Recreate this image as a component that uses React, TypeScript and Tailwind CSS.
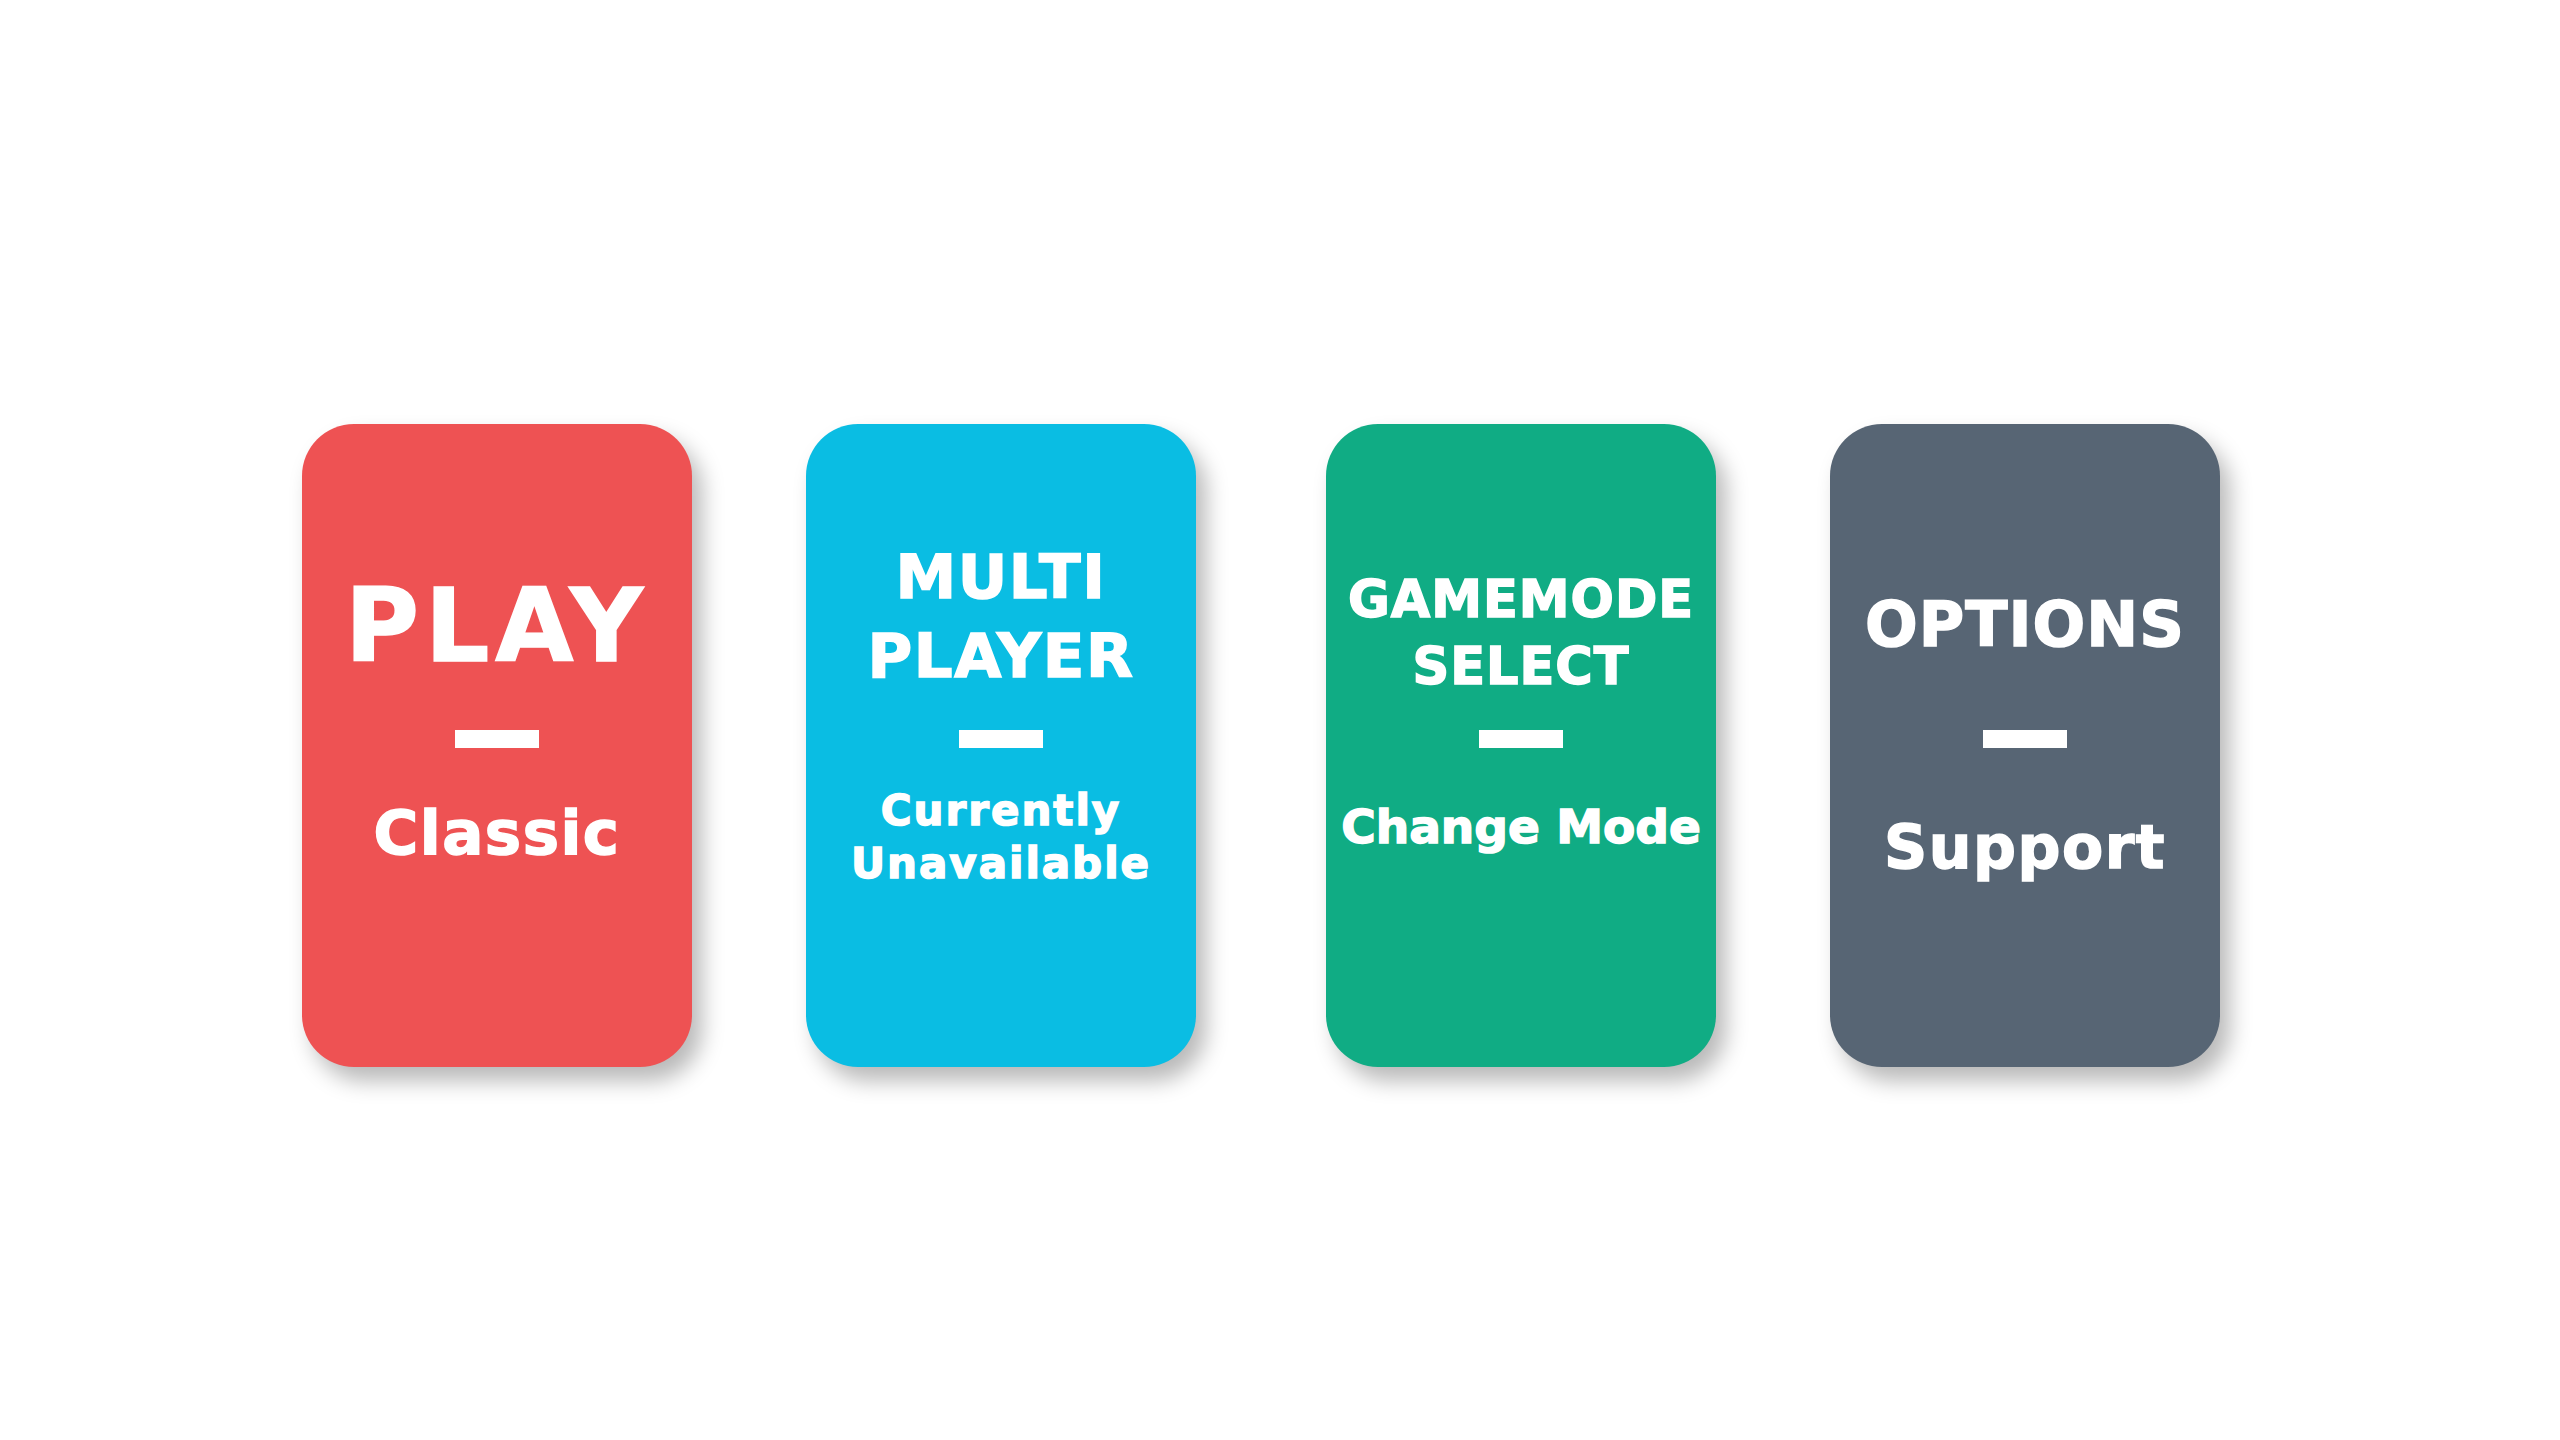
import React from 'react';

interface MenuCard {
  id: string;
  title: string[];
  subtitle: string[];
  bg: string;
  titleClass: string;
  subClass: string;
  extra?: string;
}

// colours from the flat ui palette
const cards: MenuCard[] = [
  {
    id: 'play',
    title: ['PLAY'],
    subtitle: ['Classic'],
    bg: 'bg-[#ee5253]',
    titleClass: 'text-[101px] leading-[100px] tracking-[6px] pt-[12px]',
    subClass: 'text-[61px] leading-[64px] tracking-[1.5px] pb-[10px]',
  },
  {
    id: 'multi',
    title: ['MULTI', 'PLAYER'],
    subtitle: ['Currently', 'Unavailable'],
    bg: 'bg-[#0abde3]',
    titleClass: 'text-[61px] leading-[79px] tracking-[1.5px] pb-[8px]',
    subClass: 'text-[42px] leading-[53px] tracking-[2px] pb-[2px]',
  },
  {
    id: 'gamemode',
    title: ['GAMEMODE', 'SELECT'],
    subtitle: ['Change Mode'],
    bg: 'bg-[#10ac84]',
    titleClass: 'text-[51px] leading-[67px] tracking-[1px] pt-[26px]',
    subClass: 'text-[47px] leading-[50px] pb-[22px]',
    extra: 'ml-[16px]',
  },
  {
    id: 'options',
    title: ['OPTIONS'],
    subtitle: ['Support'],
    bg: 'bg-[#576574]',
    titleClass: 'text-[62px] leading-[70px] tracking-[1px] pt-[10px]',
    subClass: 'text-[60px] leading-[64px] tracking-[1.5px] pt-[18px]',
  },
];

function Card({ card }: { card: MenuCard }) {
  return (
    <div
      className={`${card.bg} ${card.extra ?? ''} w-[390px] h-[643px] shrink-0 rounded-[52px] shadow-[10px_14px_22px_rgba(0,0,0,0.28)] flex flex-col items-center pt-[96px] text-white font-bold [-webkit-text-stroke:1.5px_white]`}
    >
      {/* title */}
      <div className={`h-[200px] flex flex-col items-center justify-center text-center ${card.titleClass}`}>
        {card.title.map((line) => (
          <div key={line} className="whitespace-nowrap">
            {line}
          </div>
        ))}
      </div>
      {/* dash */}
      <div className="w-[84px] h-[18px] bg-white mt-[10px]" />
      {/* subtitle */}
      <div className={`h-[180px] flex flex-col items-center justify-center text-center ${card.subClass}`}>
        {card.subtitle.map((line) => (
          <div key={line} className="whitespace-nowrap">
            {line}
          </div>
        ))}
      </div>
    </div>
  );
}

export default function App() {
  return (
    <div className="w-full h-[1440px] bg-white overflow-hidden font-['DejaVu_Sans','Liberation_Sans',sans-serif]">
      <div className="flex items-start gap-[114px] pt-[424px] pl-[302px]">
        {cards.map((card) => (
          <Card key={card.id} card={card} />
        ))}
      </div>
    </div>
  );
}
